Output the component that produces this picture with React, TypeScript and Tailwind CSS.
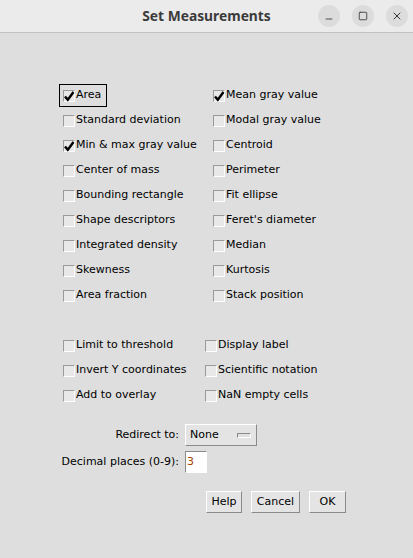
import { Minus, Square, X } from 'lucide-react'

const col1 = [
  { label: 'Area', checked: true, focus: true },
  { label: 'Standard deviation', checked: false },
  { label: 'Min & max gray value', checked: true },
  { label: 'Center of mass', checked: false },
  { label: 'Bounding rectangle', checked: false },
  { label: 'Shape descriptors', checked: false },
  { label: 'Integrated density', checked: false },
  { label: 'Skewness', checked: false },
  { label: 'Area fraction', checked: false },
]

const col2 = [
  { label: 'Mean gray value', checked: true },
  { label: 'Modal gray value', checked: false },
  { label: 'Centroid', checked: false },
  { label: 'Perimeter', checked: false },
  { label: 'Fit ellipse', checked: false },
  { label: "Feret's diameter", checked: false },
  { label: 'Median', checked: false },
  { label: 'Kurtosis', checked: false },
  { label: 'Stack position', checked: false },
]

const extra1 = ['Limit to threshold', 'Invert Y coordinates', 'Add to overlay']
const extra2 = ['Display label', 'Scientific notation', 'NaN empty cells']

function Box({ checked }: { checked?: boolean }) {
  return (
    <span className="relative w-[12px] h-[12px] shrink-0 border border-t-[#9a9a9a] border-l-[#9a9a9a] border-b-white border-r-white bg-[#e8e8e8]">
      {checked && (
        <svg viewBox="0 0 12 12" className="absolute -left-px -top-px w-[12px] h-[12px] overflow-visible">
          <path d="M2 6.5 L4.8 9.8 L10.5 2" fill="none" stroke="#000" strokeWidth="2.4" />
        </svg>
      )}
    </span>
  )
}

function Check({ label, checked, focus }: { label: string; checked?: boolean; focus?: boolean }) {
  return (
    <div className="h-[25px] flex items-center">
      <div
        className={
          'flex items-center h-[23px] pl-[3px] ' +
          (focus ? 'border border-black pr-[5px]' : 'border border-transparent pr-[3px]')
        }
      >
        <Box checked={checked} />
        <span className="ml-[1px] whitespace-nowrap">{label}</span>
      </div>
    </div>
  )
}

function Btn({ children, w }: { children: string; w: string }) {
  return (
    <div
      className={
        w +
        ' h-[22px] flex items-center justify-center bg-[#e4e4e4] border border-t-white border-l-white border-b-[#8a8a8a] border-r-[#8a8a8a]'
      }
    >
      {children}
    </div>
  )
}

export default function App() {
  return (
    <div className="w-[413px] h-[558px] bg-[#dedede] flex flex-col text-[11px] text-black" style={{ fontFamily: '"DejaVu Sans", sans-serif' }}>
      {/* title bar */}
      <div className="h-[33px] shrink-0 bg-[#ebebeb] border-b border-[#c2c2c2] relative flex items-center justify-center">
        <span className="text-[13.8px] font-bold text-[#3b3b3b]" style={{ fontFamily: '"Noto Sans", sans-serif' }}>
          Set Measurements
        </span>
        <div className="absolute right-[5px] top-[5px] flex gap-[12px]">
          <div className="w-[22px] h-[22px] rounded-full bg-[#dcdcdc] flex items-center justify-center">
            <Minus className="w-[10px] h-[10px] mt-[5px] text-[#333]" strokeWidth={2} />
          </div>
          <div className="w-[22px] h-[22px] rounded-full bg-[#dcdcdc] flex items-center justify-center">
            <Square className="w-[10px] h-[10px] text-[#333]" strokeWidth={2} />
          </div>
          <div className="w-[22px] h-[22px] rounded-full bg-[#dcdcdc] flex items-center justify-center">
            <X className="w-[12px] h-[12px] text-[#333]" strokeWidth={2} />
          </div>
        </div>
      </div>

      {/* checkbox groups */}
      <div className="pt-[50px] pl-[59px] flex">
        <div className="w-[150px]">
          {col1.map((c) => (
            <Check key={c.label} {...c} />
          ))}
        </div>
        <div>
          {col2.map((c) => (
            <Check key={c.label} {...c} />
          ))}
        </div>
      </div>

      <div className="pt-[25px] pl-[59px] flex">
        <div className="w-[142px]">
          {extra1.map((l) => (
            <Check key={l} label={l} />
          ))}
        </div>
        <div>
          {extra2.map((l) => (
            <Check key={l} label={l} />
          ))}
        </div>
      </div>

      {/* redirect + decimals */}
      <div className="mt-[16px] flex items-center h-[22px]">
        <span className="w-[179px] text-right">Redirect to:</span>
        <div className="ml-[6px] w-[72px] h-[22px] flex items-center justify-between px-[4px] bg-[#e4e4e4] border border-t-white border-l-white border-b-[#8a8a8a] border-r-[#8a8a8a]">
          <span>None</span>
          <span className="w-[14px] h-[5px] border border-t-[#8a8a8a] border-l-[#8a8a8a] border-b-white border-r-white bg-[#e0e0e0] mr-[1px]" />
        </div>
      </div>

      <div className="mt-[5px] flex items-center h-[22px]">
        <span className="w-[179px] text-right">Decimal places (0-9):</span>
        <div className="ml-[6px] w-[22px] h-[22px] bg-white border border-t-[#8a8a8a] border-l-[#8a8a8a] border-b-white border-r-white flex items-center pl-[1px]">
          <span className="text-[#a33e00]">3</span>
        </div>
      </div>

      <div className="mt-[18px] pl-[206px] flex gap-[9px]">
        <Btn w="w-[36px]">Help</Btn>
        <Btn w="w-[49px]">Cancel</Btn>
        <Btn w="w-[37px]">OK</Btn>
      </div>
    </div>
  )
}
